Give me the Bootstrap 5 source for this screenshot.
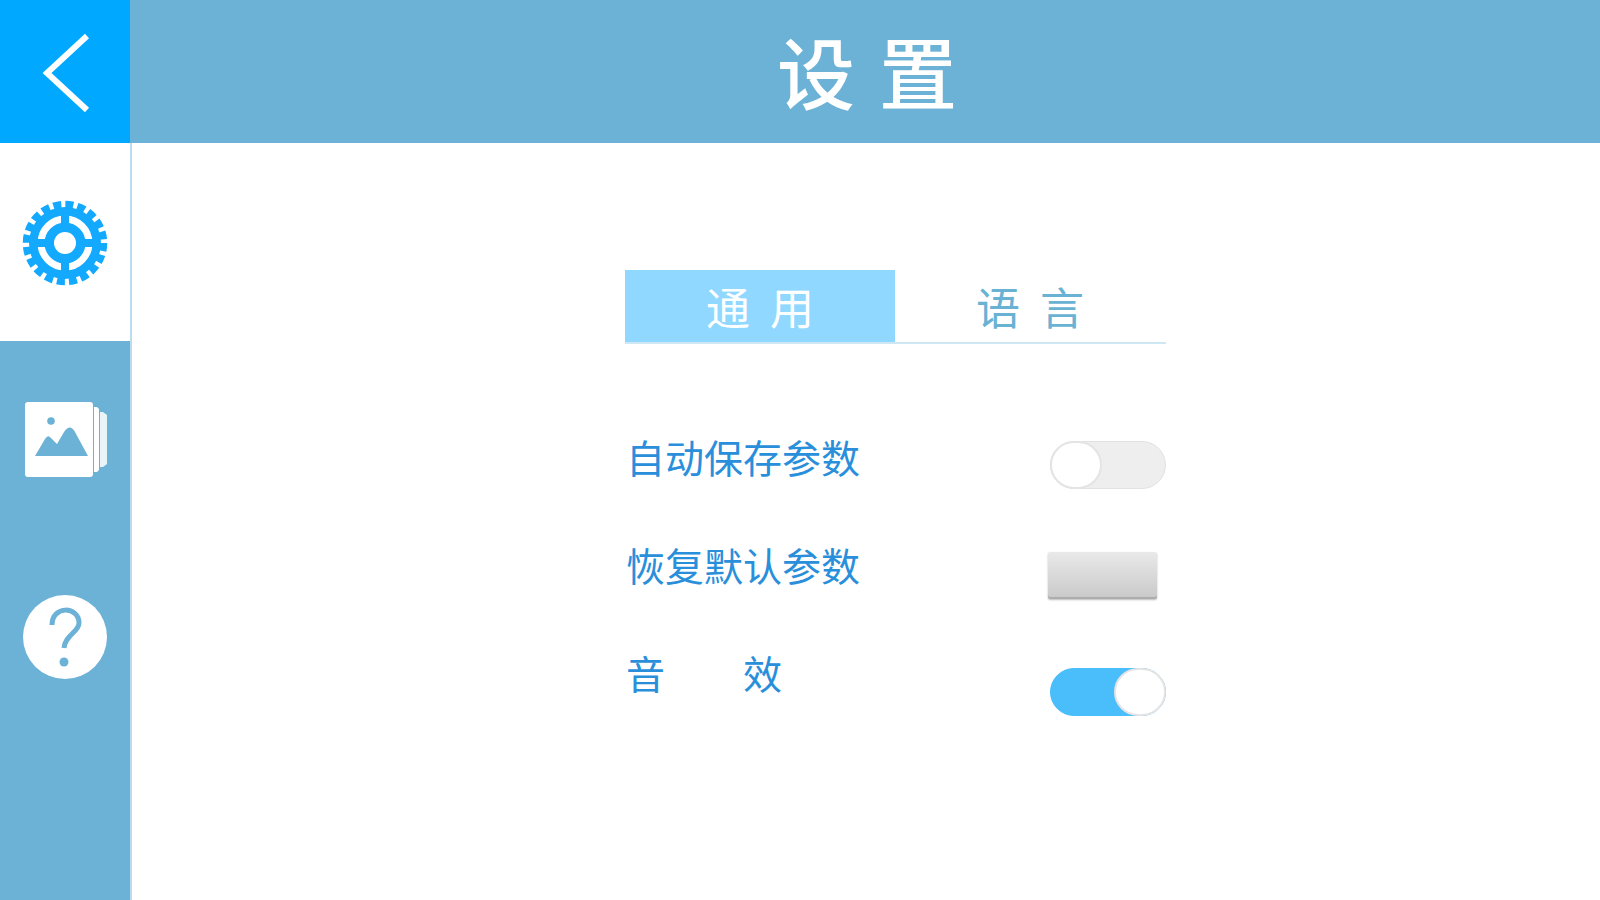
<!DOCTYPE html>
<html lang="zh-CN">
<head>
  <meta charset="UTF-8" />
  <meta name="viewport" content="width=device-width, initial-scale=1.0" />
  <title>设置</title>
  <link rel="stylesheet" href="https://cdn.jsdelivr.net/npm/bootstrap@5.3.3/dist/css/bootstrap.min.css" />
  <style>
    html, body { height:100%; }
    body { background:#fff; overflow:hidden; font-family:"Noto Sans CJK SC","Liberation Sans",sans-serif; }
    .app-shell { width:1600px; height:900px; }
    .top-bar { height:143px; background:#6cb2d6; }
    .back-cell { width:130px; background:#00a9ff; }
    .page-title { color:#fff; font-size:78px; font-weight:500; letter-spacing:24px; line-height:1; padding-left:28px; padding-bottom:4px; }
    .side-bar { width:132px; background:#6cb2d6; border-right:2px solid #b9dcee; }
    .side-cell { height:197px; }
    .side-cell-on { background:#fff; height:198px; padding-top:2px; }
    .content-col { width:541px; margin-left:493px; padding-top:127px; }
    .tab-strip { border-bottom:2px solid #cfe6f3; height:74px; }
    .tab-item { width:270px; font-size:44px; letter-spacing:20px; line-height:1; padding-left:20px; color:#6ab2d4; }
    .tab-item-on { background:#90d8ff; color:#fff; }
    .label-stack { padding-top:93px; gap:68.75px; padding-left:1px; }
    .ctrl-stack { padding-top:97px; }
    .set-label { color:#2a8fdb; font-size:39px; line-height:1; }
    .sw { width:116px; height:48px; border-radius:24px; background:#eee; border:1px solid #e2e2e2; }
    .sw-on { background:#4abdfb; border-color:#4abdfb; margin-top:69px; }
    .sw-knob { width:52px; height:48px; margin:-1px; border-radius:24px; background:#fff; border:2px solid #e4e4e4; }
    .reset-btn { width:109px; height:47px; margin-top:63px; margin-right:9px; border-radius:2px; border:0; background:linear-gradient(#e9e9e9,#c9c9c9); box-shadow:inset 0 -2px 0 #adadad, 0 1px 2px #bbb; }
  </style>
</head>
<body>
  <div class="app-shell d-flex flex-column">
    <div class="top-bar d-flex">
      <div class="back-cell d-flex align-items-center justify-content-center">
        <svg width="130" height="144" viewBox="0 0 130 144"><path d="M87 36 L47 73 L87 110" fill="none" stroke="#fff" stroke-width="6"/></svg>
      </div>
      <div class="page-title flex-grow-1 d-flex align-items-center justify-content-center">设置</div>
    </div>
    <div class="d-flex flex-grow-1">
      <div class="side-bar flex-shrink-0">
        <div class="side-cell side-cell-on d-flex align-items-center justify-content-center">
          <svg width="88" height="88" viewBox="-44 -44 88 88">
            <circle r="36" fill="#12a9ff"/>
            <circle r="38.5" fill="none" stroke="#12a9ff" stroke-width="7.5" stroke-dasharray="8 4.1"/>
            <circle r="24" fill="none" stroke="#fff" stroke-width="7"/>
            <path d="M-4 -30H4V30H-4Z M-30 -4H30V4H-30Z" fill="#12a9ff"/>
            <circle r="11" fill="#fff"/>
          </svg>
        </div>
        <div class="side-cell d-flex align-items-center justify-content-center">
          <svg class="ms-1" width="84" height="76" viewBox="0 0 84 76">
            <rect x="0" y="0" width="68" height="75" rx="3" fill="#fff"/>
            <path d="M69 5H72L74 7V68L72 70H69Z" fill="#fff"/>
            <path d="M75 10H78L82 13V62L78 65H75Z" fill="#fff" opacity=".85"/>
            <path d="M10 54 L20 37 Q23 32 26 36 L32 42 L39 30 Q45 21 50 30 L63 54 Z" fill="#6cb2d6"/>
            <circle cx="26" cy="19" r="3.8" fill="#6cb2d6"/>
          </svg>
        </div>
        <div class="side-cell d-flex align-items-center justify-content-center">
          <svg width="86" height="86" viewBox="-43 -43 86 86">
            <circle r="42" fill="#fff"/>
            <path d="M-13 -12 C-13 -32 14 -31 14 -14 C14 -5 0 -2 -1 11" fill="none" stroke="#6cb2d6" stroke-width="5"/>
            <circle cx="-1" cy="25" r="4.5" fill="#6cb2d6"/>
          </svg>
        </div>
      </div>
      <div class="content-col">
        <div class="tab-strip d-flex">
          <div class="tab-item tab-item-on d-flex align-items-center justify-content-center">通用</div>
          <div class="tab-item d-flex align-items-center justify-content-center">语言</div>
        </div>
        <div class="d-flex justify-content-between align-items-start">
          <div class="label-stack d-flex flex-column">
            <span class="set-label">自动保存参数</span>
            <span class="set-label">恢复默认参数</span>
            <span class="set-label">音　　效</span>
          </div>
          <div class="ctrl-stack d-flex flex-column align-items-end">
            <div class="sw d-flex justify-content-start"><div class="sw-knob"></div></div>
            <button type="button" class="reset-btn" aria-label="恢复默认参数"></button>
            <div class="sw sw-on d-flex justify-content-end"><div class="sw-knob"></div></div>
          </div>
        </div>
      </div>
    </div>
  </div>
  <script src="https://cdn.jsdelivr.net/npm/bootstrap@5.3.3/dist/js/bootstrap.bundle.min.js"></script>
</body>
</html>
